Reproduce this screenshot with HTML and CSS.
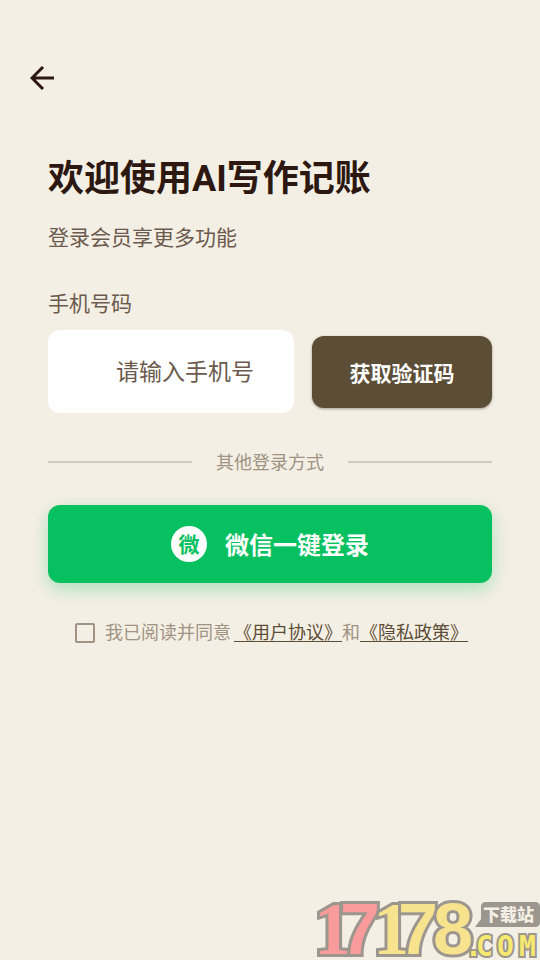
FILE: index.html
```html
<!DOCTYPE html>
<html lang="zh-CN">
<head>
<meta charset="utf-8">
<meta name="viewport" content="width=device-width, initial-scale=1">
<title>登录</title>
<link rel="stylesheet" href="styles.css">
</head>
<body>
<div class="page">
  <header class="topbar">
    <button class="back" type="button" aria-label="返回">
      <svg class="back-icon" viewBox="0 0 24 24" aria-hidden="true"><path d="M13 1 2 12l11 11M2 12h22"/></svg>
    </button>
  </header>
  <main class="content">
    <h1 class="title">欢迎使用AI写作记账</h1>
    <p class="subtitle">登录会员享更多功能</p>
    <form class="form">
      <label class="label" for="phone">手机号码</label>
      <div class="phone-row">
        <input class="phone" id="phone" type="tel" placeholder="请输入手机号">
        <button class="code" type="button">获取验证码</button>
      </div>
      <div class="divider"><span>其他登录方式</span></div>
      <button class="wechat" type="button"><span class="wechat-badge">微</span><span class="wechat-text">微信一键登录</span></button>
      <div class="agreement">
        <input class="check" id="agree" type="checkbox">
        <label class="agree-label" for="agree">我已阅读并同意</label>
        <span class="terms"><a href="#terms">《用户协议》</a>和<a href="#privacy">《隐私政策》</a></span>
      </div>
    </form>
  </main>
  <svg class="mark" viewBox="0 0 224 62" role="img" aria-label="17178.COM 下载站">
    <text class="digits red" y="56" x="-2 24"><tspan class="one">1</tspan>7</text>
    <text class="digits yellow" y="56" x="57 82 117"><tspan class="one">1</tspan>78</text>
    <path class="bubble" d="M170 4h49q5 0 5 5v15q0 5-5 5h-54l-6 0 6-8V9q0-5 5-5z"/>
    <text class="bubble-text" x="167" y="23">下载站</text>
    <text class="com" x="149 160 181 203" y="58">.COM</text>
  </svg>
</div>
</body>
</html>
```
FILE: styles.css
```css
* { box-sizing: border-box; }

body {
  margin: 0;
  background: #f4efe4;
  color: #2c1810;
  font-family: Roboto, "Noto Sans CJK SC", sans-serif;
}

button, input { font-family: inherit; }

button {
  border: 0;
  padding: 0;
  cursor: pointer;
}

.page {
  position: relative;
  min-height: 100vh;
}

.topbar { padding: 60px 24px 0; }

.back {
  display: flex;
  align-items: center;
  justify-content: center;
  width: 36px;
  height: 36px;
  background: none;
}

.back-icon {
  width: 24px;
  height: 24px;
  fill: none;
  stroke: #2c1810;
  stroke-width: 3;
}

.content { padding: 57px 48px 0; }

.title {
  margin: 0;
  font-size: 36px;
  line-height: 52px;
  font-weight: 700;
}

.subtitle {
  margin: 18px 0 36px;
  font-size: 21px;
  line-height: 30px;
  color: #6b5a4d;
}

.label {
  display: block;
  margin-bottom: 11px;
  font-size: 21px;
  line-height: 30px;
  color: #6b5a4d;
}

.phone-row {
  display: flex;
  align-items: center;
  gap: 18px;
}

.phone {
  flex: 1;
  min-width: 0;
  height: 83px;
  padding: 2px 24px 0 68px;
  border: 0;
  border-radius: 12px;
  background: #fff;
  color: #2c1810;
  font-size: 23px;
}

.phone::placeholder {
  color: #6b5a4d;
  opacity: 1;
}

.code {
  width: 180px;
  height: 72px;
  border-radius: 12px;
  background: #5c4d36;
  box-shadow: 0 1px 3px rgba(0, 0, 0, 0.35);
  color: #fff;
  font-size: 21px;
  font-weight: 700;
}

.divider {
  display: flex;
  align-items: center;
  gap: 24px;
  margin: 35px 0 29px;
  font-size: 18px;
  line-height: 28px;
  color: #a09383;
}

.divider span { padding-top: 2px; line-height: 26px; }

.divider::before,
.divider::after {
  content: "";
  flex: 1;
  height: 2px;
  background: #d2c8bc;
}

.wechat {
  display: flex;
  align-items: center;
  justify-content: center;
  gap: 18px;
  width: 100%;
  height: 78px;
  border-radius: 12px;
  background: #07c160;
  box-shadow: 0 6px 18px rgba(7, 193, 96, 0.3);
  color: #fff;
  font-size: 24px;
  font-weight: 700;
}

.wechat-text { padding-bottom: 2px; }

.wechat-badge {
  width: 36px;
  height: 36px;
  padding-top: 1px;
  border-radius: 50%;
  background: #fff;
  color: #07c160;
  font-size: 21px;
  line-height: 36px;
}

.agreement {
  display: flex;
  align-items: center;
  justify-content: center;
  margin-top: 36px;
  font-size: 18px;
  line-height: 28px;
  color: #a09383;
}

.check {
  appearance: none;
  width: 20px;
  height: 20px;
  margin: 0 10px 0 3px;
  border: 2px solid #a09383;
  border-radius: 2px;
}

.check:checked { background: #5c4d36; }

.agree-label { margin-right: 3px; }

.terms a {
  color: #5c4d36;
  text-decoration: underline;
  text-decoration-thickness: 1px;
  text-underline-offset: 2px;
}

.mark {
  position: absolute;
  right: 0;
  bottom: 0;
  width: 224px;
  height: 62px;
}

.mark text {
  paint-order: stroke;
  stroke: #9c968e;
  stroke-width: 6px;
  stroke-linejoin: miter;
}

.mark .digits {
  font-family: "Liberation Sans", sans-serif;
  font-size: 72px;
  font-weight: 700;
}

.mark .one {
  font-family: "Liberation Serif", serif;
  font-size: 75px;
}

.red { fill: #f99b9b; }
.yellow { fill: #f7e38e; }
.bubble { fill: #9c968e; }

.mark .bubble-text {
  fill: #f4efe4;
  stroke: none;
  font-size: 17px;
  font-weight: 900;
}

.mark .com {
  fill: #f7e96f;
  stroke-width: 4px;
  font-family: "DejaVu Sans Mono", monospace;
  font-size: 28px;
  font-weight: 700;
}
```
